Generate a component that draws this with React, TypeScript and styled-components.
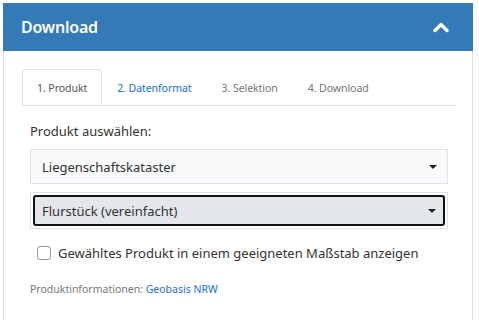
import React from 'react';
import styled, { createGlobalStyle } from 'styled-components';

const GlobalStyle = createGlobalStyle`
  body {
    margin: 0;
    background: #fff;
    font-family: 'Noto Sans', 'Open Sans', sans-serif;
    color: #333;
    overflow: hidden;
  }
`;

const Page = styled.div`
  padding: 3px 0 0 3px;
  width: 470px;
`;

const Panel = styled.section`
  border: 1px solid #ddd;
  border-top: none;
  border-bottom: none;
  height: 317px;
  box-sizing: border-box;
`;

const Header = styled.header`
  display: flex;
  align-items: center;
  justify-content: space-between;
  height: 48px;
  padding: 0 24px 0 18px;
  background: #337ab7;
  color: #fff;
  margin: 0 -1px;
`;

const Title = styled.h2`
  margin: 0;
  font-size: 16px;
  font-weight: 600;
  letter-spacing: -0.2px;
`;

const Body = styled.div`
  padding: 18px 16px 0 18px;
`;

const TabList = styled.nav`
  display: flex;
  border-bottom: 1px solid #dee2e6;
  height: 36px;
`;

const Tab = styled.span<{ $active?: boolean; $link?: boolean }>`
  display: flex;
  align-items: center;
  padding: 1px 14px 0 14px;
  font-size: 10.6px;
  letter-spacing: -0.1px;
  color: ${p => (p.$active ? '#555' : p.$link ? '#1a6ee8' : '#777')};
  border: 1px solid ${p => (p.$active ? '#dee2e6' : 'transparent')};
  border-bottom: none;
  border-radius: 4px 4px 0 0;
  background: #fff;
  margin-bottom: -1px;
  height: 36px;
  box-sizing: border-box;
`;

const Pane = styled.div`
  padding: 16px 8px 0 8px;
`;

const Label = styled.div`
  font-size: 13px;
  color: #333;
  line-height: 18px;
  margin-bottom: 9px;
`;

const SelectBox = styled.div<{ $focused?: boolean }>`
  display: flex;
  align-items: center;
  justify-content: space-between;
  height: ${p => (p.$focused ? '37px' : '35px')};
  box-sizing: border-box;
  padding: ${p => (p.$focused ? '2px' : '0 10px 0 11px')};
  border: 1px solid #dee2e6;
  background: ${p => (p.$focused ? '#fff' : '#f8f9fa')};
  font-size: 13px;
  color: #333;
  margin-bottom: 8px;
`;

const FocusRing = styled.div`
  flex: 1;
  display: flex;
  align-items: center;
  justify-content: space-between;
  height: 31px;
  box-sizing: border-box;
  border: 2px solid #111;
  border-radius: 3px;
  padding: 0 7px 0 7px;
  background: #e3e6ea;
`;

const Caret = styled.span`
  width: 0;
  height: 0;
  border-left: 4px solid transparent;
  border-right: 4px solid transparent;
  border-top: 4px solid #222;
`;

const CheckRow = styled.label`
  display: flex;
  align-items: center;
  gap: 7px;
  margin: 15px 0 0 7px;
  font-size: 13px;
  color: #333;
`;

const CheckBox = styled.span`
  width: 12px;
  height: 12px;
  border: 1px solid #999;
  border-radius: 3px;
  background: #fff;
`;

const Info = styled.p`
  margin: 20px 0 0;
  font-size: 10.5px;
  color: #777;
`;

const InfoLink = styled.a`
  color: #1a6ee8;
  text-decoration: none;
`;

function ChevronUp() {
  return (
    <svg width="16" height="12" viewBox="0 0 16 12">
      <path d="M2 9.5 L8 3.5 L14 9.5" fill="none" stroke="#fff" strokeWidth="3.4" strokeLinecap="round" strokeLinejoin="round" />
    </svg>
  );
}

export default function App() {
  return (
    <Page>
      <GlobalStyle />
      <Panel>
        <Header>
          <Title>Download</Title>
          <ChevronUp />
        </Header>
        <Body>
          <TabList>
            <Tab $active>1. Produkt</Tab>
            <Tab $link>2. Datenformat</Tab>
            <Tab>3. Selektion</Tab>
            <Tab>4. Download</Tab>
          </TabList>
          <Pane>
            <Label>Produkt auswählen:</Label>
            <SelectBox>
              Liegenschaftskataster
              <Caret />
            </SelectBox>
            <SelectBox $focused>
              <FocusRing>
                Flurstück (vereinfacht)
                <Caret />
              </FocusRing>
            </SelectBox>
            <CheckRow>
              <CheckBox />
              Gewähltes Produkt in einem geeigneten Maßstab anzeigen
            </CheckRow>
            <Info>
              Produktinformationen: <InfoLink href="#">Geobasis NRW</InfoLink>
            </Info>
          </Pane>
        </Body>
      </Panel>
    </Page>
  );
}
